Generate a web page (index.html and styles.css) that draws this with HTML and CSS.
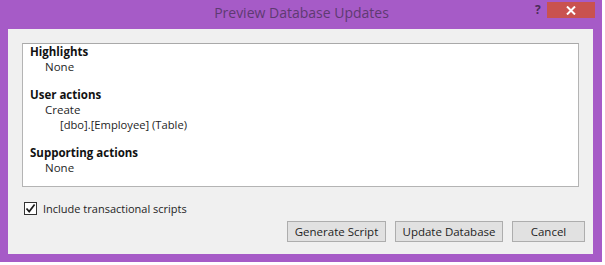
FILE: index.html
```html
<!DOCTYPE html>
<html>
<head>
<meta charset="utf-8">
<link rel="stylesheet" href="styles.css">
</head>
<body>
<div class="window">
  <div class="titlebar">
    <div class="title">Preview Database Updates</div>
    <div class="help">?</div>
    <div class="close">
      <svg width="10" height="9" viewBox="0 0 10 9"><path d="M1 0.5 L9 8.5 M9 0.5 L1 8.5" stroke="#fff" stroke-width="2"/></svg>
    </div>
  </div>
  <div class="client">
    <div class="listbox">
      <div class="head">Highlights</div>
      <div class="l1">None</div>
      <div class="head gap">User actions</div>
      <div class="l1">Create</div>
      <div class="l2">[dbo].[Employee] (Table)</div>
      <div class="head gap">Supporting actions</div>
      <div class="l1">None</div>
    </div>
    <label class="check">
      <span class="box">
        <svg width="11" height="11" viewBox="0 0 11 11"><path d="M1.5 5.5 L4.2 8.6 L9.6 1.6" fill="none" stroke="#1b1b1b" stroke-width="1.7"/></svg>
      </span>
      <span class="label">Include transactional scripts</span>
    </label>
    <div class="buttons">
      <div class="btn w1">Generate Script</div>
      <div class="btn w2">Update Database</div>
      <div class="btn w3">Cancel</div>
    </div>
  </div>
</div>
</body>
</html>
```
FILE: styles.css
```css
html, body {
  margin: 0;
  padding: 0;
  background: #ffffff;
}
body {
  font-family: "Open Sans", "Noto Sans", sans-serif;
  font-size: 11.5px;
  color: #1e1e1e;
}
.window {
  width: 602px;
  height: 262px;
  box-sizing: border-box;
  background: #a65bc7;
  padding: 0 9px 8px 8px;
  display: flex;
  flex-direction: column;
}
.titlebar {
  height: 29px;
  position: relative;
  display: flex;
  align-items: flex-start;
}
.title {
  flex: 1;
  text-align: center;
  font-size: 14px;
  color: #5e3a72;
  padding-top: 3px;
  padding-left: 2px;
}
.help {
  position: absolute;
  left: 527px;
  top: 1px;
  font-size: 12px;
  font-weight: bold;
  color: #4a2c5a;
}
.close {
  position: absolute;
  left: 539px;
  top: 2px;
  width: 48px;
  height: 16px;
  background: #c9524f;
  display: flex;
  align-items: center;
  justify-content: center;
}
.client {
  flex: 1;
  background: #f0f0f0;
  padding: 14px 14px 0 14px;
  display: flex;
  flex-direction: column;
}
.listbox {
  height: 144px;
  box-sizing: border-box;
  background: #ffffff;
  border: 1px solid #b4b4b4;
  border-top-color: #a9a9a9;
  padding: 0 0 0 7px;
  line-height: 15px;
}
.head {
  font-weight: bold;
  color: #111;
}
.gap {
  margin-top: 13px;
}
.l1 {
  padding-left: 15px;
}
.l2 {
  padding-left: 30px;
  font-size: 11.2px;
}
.check {
  display: flex;
  align-items: center;
  gap: 6px;
  margin-top: 14px;
  margin-left: 2px;
  height: 15px;
}
.label {
  font-size: 11px;
}
.box {
  width: 11px;
  height: 11px;
  border: 1px solid #333;
  background: #fff;
  display: flex;
}
.buttons {
  display: flex;
  justify-content: flex-end;
  gap: 9px;
  margin-top: 5px;
  margin-right: -6px;
}
.btn {
  height: 21px;
  box-sizing: border-box;
  background: #e1e1e1;
  border: 1px solid #adadad;
  display: flex;
  align-items: center;
  justify-content: center;
}
.w1 { width: 99px; }
.w2 { width: 108px; }
.w3 { width: 73px; }
```
